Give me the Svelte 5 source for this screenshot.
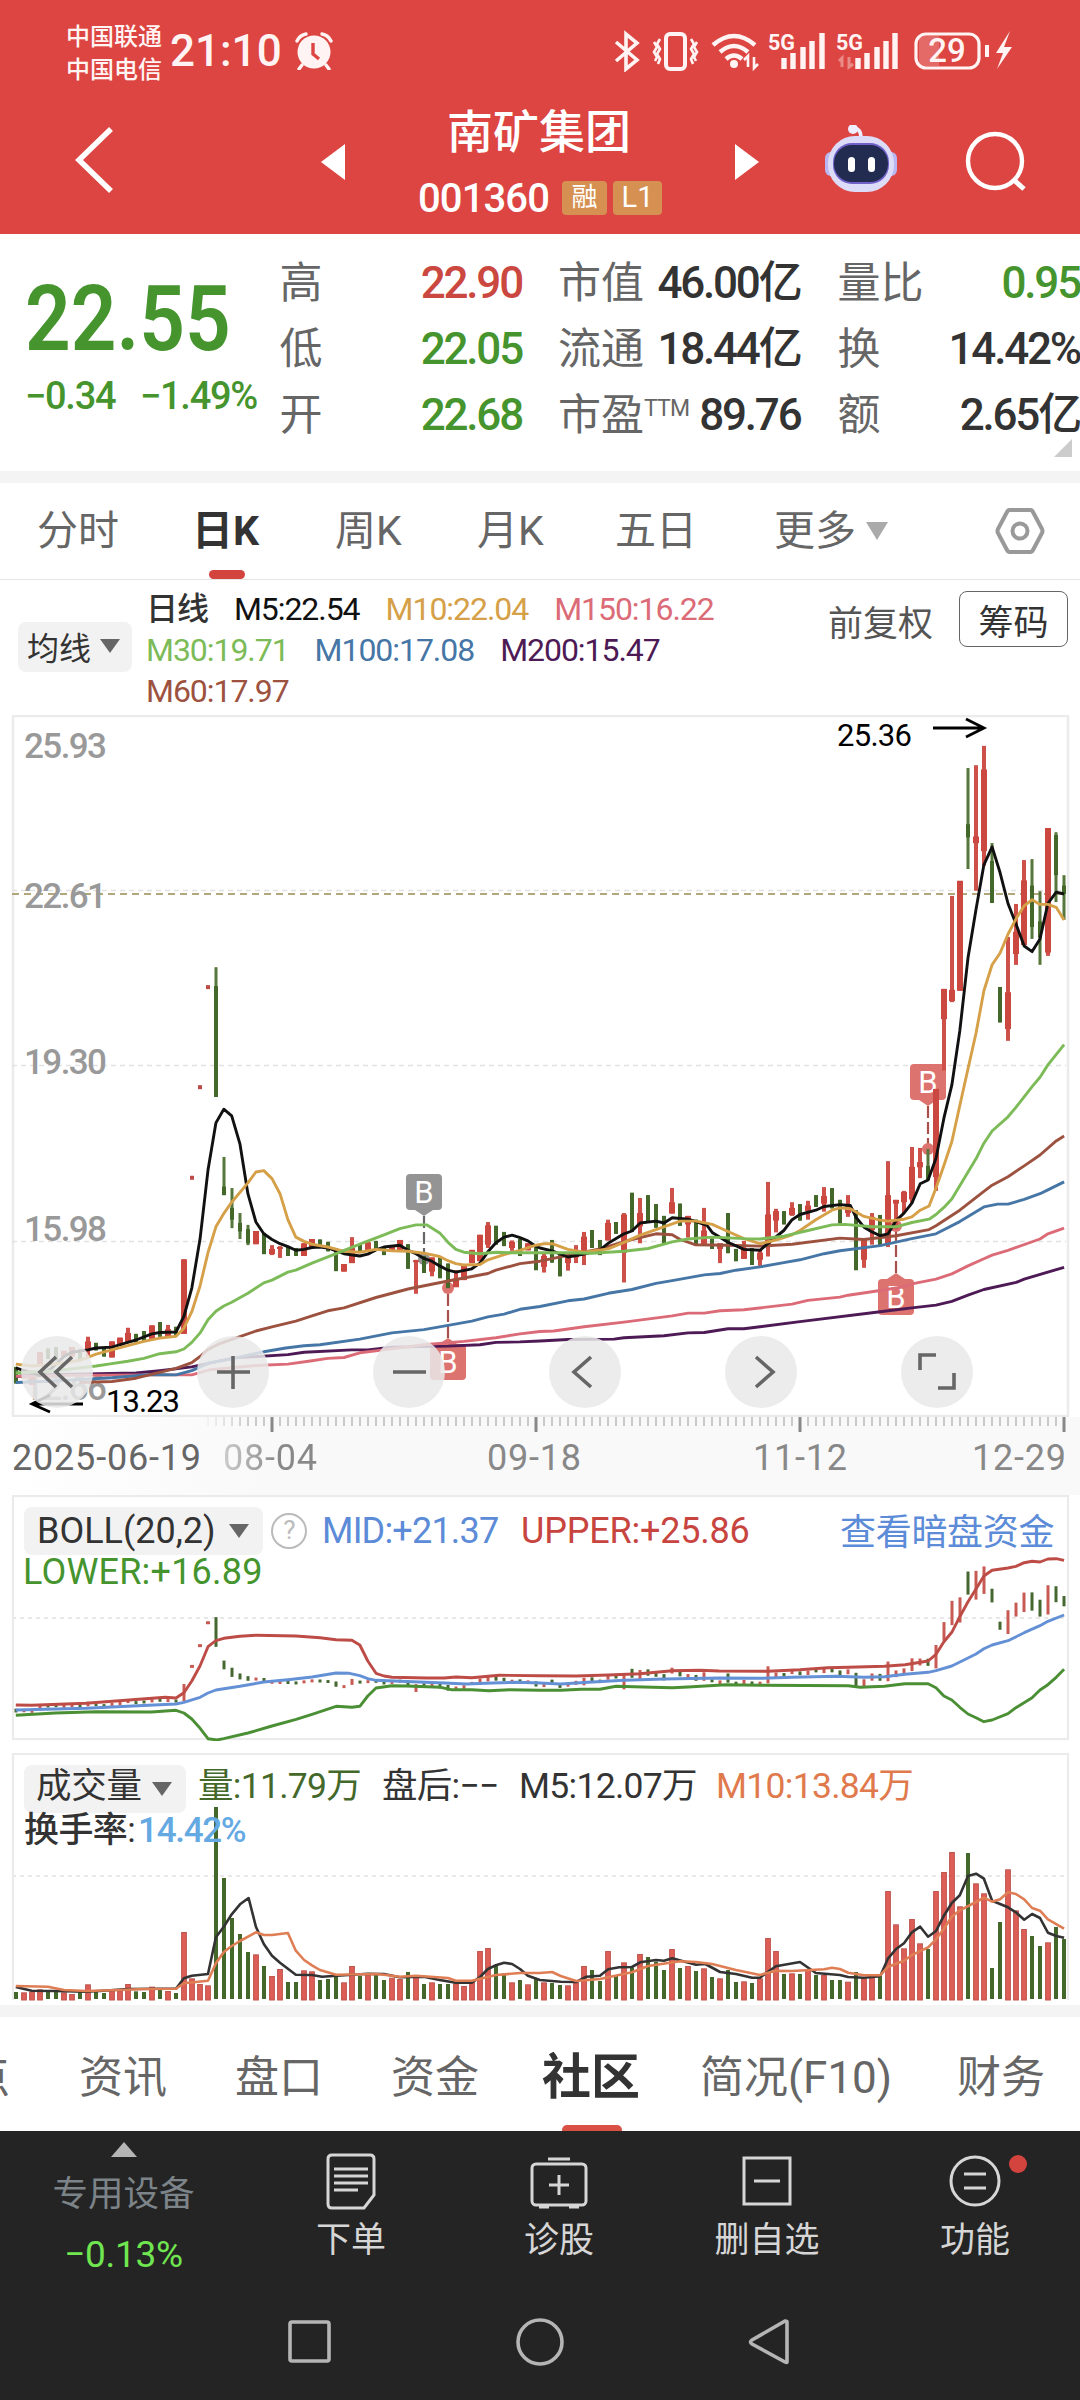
<script lang="ts">
	// one entry per day: colour, high, low, [body top, body bottom]
	const raw = `g 1392 1427|r 1397 1416|r 1400 1430|r 1361 1386|g 1353 1375|g 1350 1378|r 1358 1370|r 1350 1370|g 1355 1378|r 1328 1370 1338 1356|g 1341 1357|g 1350 1370|r 1338 1372|r 1330 1347|r 1309 1340 1320 1340|g 1322 1340|g 1316 1338|r 1304 1334|g 1297 1328|r 1303 1330 1312 1328|g 1307 1325|r 1164 1322|r 987 995|r 795 803|r 583 591|g 545 820 585 820|g 947 1028 1010 1028|g 1013 1098 1055 1080|g 1066 1121 1087 1105|g 1091 1134 1100 1130|r 1104 1132|g 1108 1153|r 1134 1155 1142 1153|r 1136 1161 1138 1142|g 1136 1157|g 1140 1157|r 1130 1157|r 1121 1138|g 1122 1137|g 1127 1147|g 1140 1189|r 1174 1190|r 1117 1172 1140 1172|g 1132 1150|r 1128 1145|g 1125 1142|g 1140 1155|r 1135 1147|r 1123 1146|g 1132 1184|r 1165 1237 1166 1170|g 1157 1193|r 1160 1200 1160 1190|g 1160 1204|g 1173 1225|r 1187 1223 1205 1223|r 1175 1208|r 1144 1172|r 1112 1168|r 1085 1140 1092 1133|g 1093 1133|g 1106 1136|r 1124 1146 1127 1140|g 1121 1157|r 1130 1145|g 1138 1187|r 1150 1192 1157 1180|g 1123 1171|g 1155 1200|r 1155 1188 1160 1172|r 1134 1172 1150 1160|r 1106 1176 1116 1153|g 1102 1140|g 1123 1155|r 1080 1124 1087 1124|g 1085 1110|r 1066 1213 1069 1150|g 1023 1106|r 1034 1130 1066 1094|g 1028 1087|g 1047 1097|g 1072 1130|r 1013 1067 1043 1067|g 1046 1093|r 1072 1118 1072 1090|g 1080 1134|r 1055 1134 1103 1134|g 1120 1142|r 1130 1172 1130 1142|g 1066 1151|g 1142 1168|r 1125 1163 1140 1163|g 1140 1176|r 1142 1178 1150 1165|r 1000 1158 1069 1138|r 1057 1107 1062 1082|g 1062 1090|r 1043 1072 1055 1070|g 1047 1082|r 1040 1080 1050 1062|g 1028 1053|r 1011 1063 1030 1046|g 1013 1056|g 1038 1088|r 1028 1074 1050 1066|g 1060 1187|r 1120 1182 1120 1165|r 1066 1133 1074 1102|g 1070 1134|r 956 1138 1028 1130|r 1038 1100 1038 1046|r 1019 1066 1021 1043|r 926 1044 968 1037|r 928 992 958 969|g 930 996 966 996|r 803 1019 803 990|r 591 764 591 655|r 394 619 593 617|r 362 595|g 123 337 242 270|r 117 383 268 282|r 76 330 126 299|g 282 409 320 409|g 587 662|r 481 701 598 676|r 411 540 470 517|r 318 498 361 498|g 316 485 372 460|g 384 540 448 482|r 250 521 250 514|g 259 407 265 350|g 350 445 372 390`

	const volumes = [741,742,740,733,738,740,742,747,740,718,740,744,735,738,717,739,741,725,733,738,744,561,700,717,721,186,399,519,567,621,628,663,693,672,711,711,676,679,705,702,693,712,663,693,690,690,705,698,702,681,690,717,712,717,717,715,723,705,618,609,661,685,712,705,718,700,712,714,720,721,712,663,675,708,618,693,652,668,627,636,650,675,612,669,663,678,670,696,700,675,711,709,714,700,579,618,687,685,687,675,690,690,705,705,710,681,700,693,693,438,538,610,522,595,612,438,381,321,484,324,415,445,669,531,373,496,552,573,603,592,546,582]

	// every line comes as two halves of the time axis, joined by "/"
	const maLines = [
		{ color: '#4d1a55', d: '46,1413 90,1409 250,1407 395,1405 464,1400 557,1392 680,1373 836,1366 883,1361 1022,1356 1068,1356 1138,1350 1301,1348 1394,1345 1440,1340 1510,1339 1568,1337/81,1334 215,1333 244,1330 360,1326 430,1320 477,1319 546,1311 592,1311 639,1307 755,1296 988,1275 1080,1267 1150,1261 1196,1253 1243,1240 1289,1228 1383,1213 1406,1206 1522,1181' },
		{ color: '#dc6b78', d: '46,1412 200,1410 450,1409 557,1409 610,1398 743,1389 836,1386 906,1379 952,1374 999,1372 1045,1362 1115,1356 1231,1345 1347,1338 1440,1330 1510,1322 1568,1317/40,1316 128,1307 244,1297 384,1284 430,1278 477,1278 523,1273 592,1271 732,1259 778,1251 871,1244 895,1240 988,1230 1057,1222 1080,1216 1150,1206 1196,1195 1243,1178 1289,1163 1313,1155 1359,1145 1452,1121 1475,1110 1522,1098' },
		{ color: '#4676a6', d: '46,1425 150,1422 325,1415 440,1408 511,1409 557,1400 610,1383 673,1375 720,1367 766,1360 830,1352 883,1347 929,1345 1045,1333 1138,1320 1231,1313 1301,1304 1370,1295 1417,1286 1464,1280 1510,1270 1568,1264/81,1252 128,1248 198,1236 267,1228 337,1215 384,1209 477,1197 523,1194 569,1187 639,1180 708,1171 755,1165 825,1152 871,1146 988,1135 1080,1120 1150,1110 1219,1084 1289,1053 1329,1047 1359,1047 1406,1037 1452,1025 1475,1017 1522,1000' },
		{ color: '#9d5240', d: '230,1425 325,1423 395,1416 511,1395 557,1383 581,1370 604,1355 640,1342 743,1316 790,1307 859,1295 906,1284 952,1273 999,1267 1092,1245 1185,1227 1301,1210 1417,1194 1440,1187 1510,1173 1568,1168/105,1152 174,1142 267,1122 337,1110 384,1112 407,1122 450,1133 546,1134 639,1136 732,1132 871,1119 941,1122 1034,1114 1130,1101 1150,1093 1219,1060 1289,1020 1313,1007 1359,989 1406,966 1452,943 1499,913 1522,903' },
		{ color: '#111', d: '46,1394 70,1400 116,1410 150,1395 186,1370 209,1361 255,1356 279,1352 325,1350 371,1340 395,1335 441,1322 464,1319 511,1318 534,1285 557,1225 581,1120 604,975 627,875 650,846 673,860 697,920 720,1025 743,1085 766,1110 790,1122 813,1131 836,1137 859,1145 883,1143 906,1139 929,1138 952,1140 976,1146 999,1152 1045,1157 1068,1153 1092,1144 1115,1138 1161,1134 1185,1145 1208,1152 1231,1162 1254,1168 1277,1178 1301,1187 1324,1191 1370,1184 1394,1172 1417,1148 1440,1129 1464,1117 1487,1113 1510,1118 1533,1125 1556,1136/0,1140 35,1146 81,1159 128,1153 174,1144 198,1130 244,1110 267,1104 291,1087 337,1083 360,1087 384,1076 430,1079 453,1084 485,1092 500,1107 546,1128 592,1143 639,1145 662,1130 708,1103 732,1080 755,1069 801,1060 825,1052 871,1048 901,1050 918,1075 941,1096 964,1106 988,1114 1011,1110 1034,1082 1057,1066 1080,1045 1104,1004 1127,996 1150,950 1173,865 1196,795 1219,680 1243,525 1266,423 1289,328 1313,290 1336,345 1359,410 1382,453 1406,500 1429,512 1452,485 1475,410 1499,386 1522,390' },
		{ color: '#d5a048', d: '46,1386 92,1390 139,1388 186,1383 232,1378 279,1365 325,1356 371,1347 418,1338 464,1331 511,1327 534,1310 557,1275 581,1220 604,1150 627,1095 650,1067 673,1043 720,1002 743,979 766,976 790,993 813,1025 836,1080 859,1117 883,1126 906,1132 952,1138 999,1147 1045,1149 1092,1143 1138,1146 1185,1147 1231,1151 1277,1158 1301,1167 1324,1173 1347,1176 1394,1175 1417,1165 1464,1154 1510,1145 1556,1134/12,1131 35,1131 81,1143 128,1149 198,1142 244,1128 291,1113 337,1101 407,1083 453,1083 500,1090 546,1105 592,1120 639,1131 685,1123 732,1112 755,1103 801,1080 848,1060 871,1055 901,1057 941,1073 988,1081 1011,1083 1057,1079 1080,1074 1104,1060 1130,1051 1150,1013 1173,965 1196,915 1219,838 1243,760 1266,685 1289,595 1313,540 1336,515 1359,475 1382,443 1406,415 1429,402 1452,412 1475,412 1499,418 1522,445' },
		{ color: '#7cbb58', d: '46,1405 162,1400 279,1390 325,1385 371,1380 418,1374 464,1364 511,1360 534,1354 557,1340 581,1320 604,1292 627,1274 650,1263 673,1255 720,1236 766,1214 790,1208 836,1191 859,1187 906,1172 976,1152 1045,1132 1115,1112 1161,1099 1208,1091 1240,1091 1277,1108 1301,1128 1324,1143 1347,1149 1394,1152 1440,1149 1487,1150 1568,1150/81,1150 151,1151 244,1147 314,1141 384,1127 430,1121 500,1117 592,1120 639,1121 708,1115 778,1103 848,1091 885,1090 964,1095 1034,1095 1080,1086 1130,1079 1150,1069 1173,1054 1196,1036 1219,1008 1266,951 1289,918 1313,892 1359,862 1382,842 1429,798 1452,778 1475,752 1522,709' }
	]
	const bollLines = [
		{ color: '#bd4c46', d: '46,675 92,676 250,670 480,652 511,654 534,638 557,603 581,557 604,500 627,482 650,475 697,469 743,466 859,468 930,473 976,479 1022,481 1045,495 1068,543 1092,580 1115,588 1138,592 1240,594 1290,594 1324,591 1370,593 1450,586 1568,587/105,588 198,585 290,581 384,572 465,571 520,573 662,574 755,569 835,563 895,562 1000,559 1060,554 1127,543 1150,523 1173,485 1196,457 1219,410 1243,365 1266,327 1289,288 1313,271 1359,264 1382,259 1406,248 1429,244 1452,246 1475,237 1499,236 1522,241' },
		{ color: '#6490d6', d: '46,690 250,685 400,677 511,672 534,667 581,652 604,639 627,630 697,619 766,606 836,599 906,591 976,579 1015,580 1045,587 1068,596 1092,601 1200,605 1290,609 1355,612 1430,609 1500,607 1568,609/60,612 140,607 244,601 360,597 523,594 639,595 732,592 860,589 941,592 1000,590 1060,583 1127,577 1150,572 1196,558 1243,534 1266,522 1289,506 1313,495 1359,482 1406,458 1452,437 1475,424 1522,405' },
		{ color: '#4b8f35', d: '46,706 160,699 280,695 440,696 511,691 534,699 557,717 581,745 604,776 630,780 650,776 720,759 790,738 860,718 906,703 976,679 1022,682 1045,679 1068,648 1092,624 1138,617 1180,618 1280,622 1310,629 1370,629 1420,632 1480,629 1568,631/60,631 120,628 174,628 221,619 300,621 384,623 430,621 540,614 640,616 895,617 930,622 1000,619 1060,611 1127,611 1150,623 1173,648 1196,660 1219,682 1243,702 1266,713 1289,725 1313,720 1359,701 1382,683 1429,653 1452,630 1475,614 1499,592 1522,568' }
	]
	const volLines = [
		{ color: '#333', d: '46,726 92,737 160,738 250,740 300,737 371,732 464,731 511,731 534,700 557,692 604,687 627,577 650,545 673,508 697,478 722,459 743,545 766,597 790,632 813,653 859,689 906,690 935,695 1000,691 1068,686 1115,687 1161,697 1231,695 1277,705 1324,713 1370,713 1394,696 1417,672 1440,661 1464,653 1487,657 1510,672 1533,692 1568,705/60,710 105,711 135,695 174,692 198,673 230,667 267,666 291,652 337,645 360,647 384,640 453,659 480,657 523,681 569,687 616,698 639,698 662,680 685,664 755,651 801,684 871,690 895,696 941,698 988,694 1011,640 1034,612 1057,595 1080,562 1104,545 1127,575 1150,558 1173,512 1196,474 1219,451 1243,393 1266,386 1289,401 1313,467 1359,487 1382,502 1406,524 1429,507 1452,519 1475,563 1499,573 1522,578' },
		{ color: '#df7e54', d: '46,723 139,725 186,735 250,738 348,735 418,732 511,731 534,715 604,707 627,655 650,621 673,603 697,588 743,562 766,570 790,570 836,564 859,617 883,645 906,661 929,675 976,689 1090,687 1115,689 1161,695 1208,692 1301,699 1324,707 1370,707 1440,690 1510,684 1568,684/35,681 60,693 105,708 174,702 267,682 314,663 407,649 453,651 500,657 569,675 639,690 685,677 732,678 825,673 848,668 871,672 895,683 941,691 988,691 1011,665 1057,647 1080,630 1127,607 1150,583 1173,551 1196,515 1219,496 1266,471 1289,458 1313,470 1336,463 1359,442 1382,447 1406,463 1429,489 1452,497 1475,523 1522,551' }
	]

	// chart units to pixels
	const ky = (v: number) => 710 + v / 2.119
	const by = (v: number) => 1480 + v / 3
	const vy = (v: number) => 1745 + v / 3
	const bollY = (v: number) => by(425 + 0.3243 * (v - 587))

	function toPoints(d: string, y: (v: number) => number) {
		return d
			.split('/')
			.map((half, h) =>
				half
					.split(' ')
					.map((p) => p.split(',').map(Number))
					.map(([px, py]) => `${(h * 540 + px / 2.904).toFixed(1)},${y(py).toFixed(1)}`)
					.join(' ')
			)
			.join(' ')
	}

	const days = raw.split('|').map((s, i) => {
		const [c, ...n] = s.split(' ')
		const [hi, lo, top = hi, bottom = lo] = n.map(Number)
		return { x: 16 + i * 8, up: c === 'r', hi, lo, top, bottom, vol: volumes[i], dash: i > 21 && i < 25 }
	})

	const priceLabels = [
		['25.93', 758],
		['22.61', 908],
		['19.30', 1074],
		['15.98', 1241],
		['12.66', 1400]
	]
	const marks = [
		{ x: 424, top: 1174, dot: 1259, color: '#949494', line: '#666' },
		{ x: 448, top: 1344, dot: 1288, color: '#dd736f', line: '#a8504b' },
		{ x: 928, top: 1064, dot: 1149, color: '#dd736f', line: '#a8504b' },
		{ x: 896, top: 1279, dot: 1226, color: '#dd736f', line: '#a8504b' }
	]
	const ticks = Array.from({ length: 108 }, (_, i) => 208 + i * 8)

	const tools = [
		'M56 1357 40 1372l16 15M72 1357l-16 15 16 15',
		'M217 1372h33M233 1356v33',
		'M393 1372h33',
		'M591 1357l-17 15 17 15',
		'M756 1357l17 15-17 15',
		'M920 1370v-15h16M938 1388h16v-15'
	]

	const maLegend = [
		[['日线', '#333'], ['M5:22.54', '#111'], ['M10:22.04', '#d5a048'], ['M150:16.22', '#dc6b78']],
		[['M30:19.71', '#7cbb58'], ['M100:17.08', '#4676a6'], ['M200:15.47', '#4d1a55']],
		[['M60:17.97', '#9d5240']]
	]
</script>

<div class="phone">
	<header>
		<div class="status">
			<div class="carriers"><span>中国联通</span><span>中国电信</span></div>
			<span class="time">21:10</span>
			<svg class="alarm" width="38" height="38" viewBox="0 0 38 38">
				<circle cx="19" cy="20" r="16.5" fill="#fff4f3" />
				<path d="M2 9Q5 3 11 2M36 9Q33 3 27 2M7 33l-3 4M31 33l3 4" stroke="#fff4f3" stroke-width="3.4" stroke-linecap="round" fill="none" />
				<path d="M18 11v11l6 5" stroke="#dc4541" stroke-width="3.4" fill="none" />
			</svg>
			<svg class="sys" width="404" height="42" viewBox="612 30 404 42" fill="none" stroke="#fff4f3">
				<path d="M616 42l21 18-11 9V34l11 9-21 18" stroke-width="3.6" />
				<rect x="666" y="34" width="19" height="35" rx="4" stroke-width="4" />
				<path d="M660 39l-3 5 3 5-3 5 3 5-2 5M654 42l3 5-3 5 3 5-2 4M691 39l3 5-3 5 3 5-3 5 2 5M697 42l-3 5 3 5-3 5 2 4" stroke-width="2.6" />
				<path d="M713 45q21-18 42 0M720 52q14-12 28 0M726 59q8-7 16 0" stroke-width="4.4" />
				<circle cx="734" cy="64" r="4" fill="#fff4f3" stroke="none" />
				<path d="M748 67V56l-4 4M754 57v11l4-4" stroke-width="2.6" />
				<path d="M784 69V58M793 69V53M803 69V47M812 69V41M822 69V33" stroke-width="5.4" stroke-linecap="butt" />
				<path d="M858 69V58M867 69V53M877 69V47M886 69V41M895 69V33" stroke-width="5.4" />
				<path d="M842 67V58l-3 3M849 57v10l4-3" stroke-width="3" opacity=".4" />
				<rect x="916" y="34" width="63" height="34" rx="10" stroke-width="3.2" />
				<path d="M919 41q0-5 5-5h15v30h-15q-5 0-5-5z" fill="#fff" opacity=".2" stroke="none" />
				<path d="M987 45v12" stroke-width="4" />
				<path d="M1010 31l-14 22h7l-6 16 15-22h-8z" fill="#fff4f3" stroke="none" />
				<g fill="#fff4f3" stroke="none" font-family="Roboto, sans-serif" font-weight="700">
					<text x="768" y="50" font-size="22" textLength="27" lengthAdjust="spacingAndGlyphs">5G</text>
					<text x="836" y="50" font-size="22" textLength="27" lengthAdjust="spacingAndGlyphs">5G</text>
					<text x="947" y="62" font-size="33" font-weight="500" text-anchor="middle">29</text>
				</g>
			</svg>
		</div>
		<div class="title-bar">
			<svg class="back" width="44" height="68" viewBox="0 0 44 68"><path d="M38 3 6 34l32 31" stroke="#fff" stroke-width="5.5" fill="none" /></svg>
			<svg class="prev" width="24" height="36" viewBox="0 0 24 36"><path d="M24 0v36L0 18z" fill="#fff" /></svg>
			<div class="title">
				<div class="name">南矿集团</div>
				<div class="code"><span>001360</span><b>融</b><b class="l1">L1</b></div>
			</div>
			<svg class="next" width="24" height="36" viewBox="0 0 24 36"><path d="M0 0v36l24-18z" fill="#fff" /></svg>
			<svg class="robot" width="74" height="68" viewBox="0 0 74 68">
				<circle cx="29" cy="4" r="5" fill="#eef" />
				<path d="M29 3q8 0 8 10" stroke="#eef" stroke-width="3.5" fill="none" />
				<rect x="1" y="27" width="12" height="24" rx="6" fill="#b9b6f2" />
				<rect x="61" y="27" width="12" height="24" rx="6" fill="#b9b6f2" />
				<rect x="4" y="11" width="66" height="56" rx="27" fill="#dcdcf8" />
				<rect x="9" y="18" width="56" height="41" rx="19" fill="#7060c8" />
				<rect x="10" y="20" width="54" height="37" rx="18" fill="#222b50" />
				<rect x="24" y="32" width="7" height="15" rx="3.5" fill="#fff" />
				<rect x="44" y="32" width="7" height="15" rx="3.5" fill="#fff" />
			</svg>
			<svg class="search" width="64" height="64" viewBox="0 0 64 64" fill="none" stroke="#fff" stroke-width="4.4">
				<circle cx="31" cy="31" r="27" /><path d="M50 50l10 9" stroke-width="5" />
			</svg>
		</div>
	</header>

	<section class="quote">
		<div class="price">
			<div class="last">22.55</div>
			<div class="change"><span>−0.34</span><span>−1.49%</span></div>
		</div>
		<dl class="c1">
			<dt>高</dt><dd class="red">22.90</dd>
			<dt>低</dt><dd class="green">22.05</dd>
			<dt>开</dt><dd class="green">22.68</dd>
		</dl>
		<dl class="c2">
			<dt>市值</dt><dd>46.00亿</dd>
			<dt>流通</dt><dd>18.44亿</dd>
			<dt>市盈<sup>TTM</sup></dt><dd>89.76</dd>
		</dl>
		<dl class="c3">
			<dt>量比</dt><dd class="green">0.95</dd>
			<dt>换</dt><dd>14.42%</dd>
			<dt>额</dt><dd>2.65亿</dd>
		</dl>
		<i class="corner"></i>
	</section>

	<nav class="periods">
		<span>分时</span>
		<span class="active">日K</span>
		<span>周K</span>
		<span>月K</span>
		<span>五日</span>
		<span>更多<i class="tri"></i></span>
		<svg width="50" height="48" viewBox="0 0 50 48" fill="none" stroke="#999" stroke-width="4">
			<path d="M14 3h22q1 0 2 2l9 17q1 2 0 4l-9 17q-1 2-2 2H14q-1 0-2-2L3 26q-1-2 0-4l9-17q1-2 2-2z" /><circle cx="25" cy="24" r="7.5" />
		</svg>
	</nav>

	<section class="ma">
		<div class="pill">均线<i class="tri"></i></div>
		<div class="legend">
			{#each maLegend as row}
				<div>
					{#each row as [text, color]}<span style="color: {color}">{text}</span>{/each}
				</div>
			{/each}
		</div>
		<span class="adjust">前复权</span>
		<button type="button">筹码</button>
	</section>

	<svg class="chart" width="1080" height="702" viewBox="0 715 1080 702">
		<rect x="13" y="716" width="1055" height="700" fill="none" stroke="#ebebeb" stroke-width="2.5" />
		<g stroke="#e2e2e2" stroke-width="1.5" stroke-dasharray="5 4">
			<path d="M12 890.5H1066M12 1065.5H1066M12 1241.5H1066" />
		</g>
		<path d="M12 894H1066" stroke="#b4a67c" stroke-width="2" stroke-dasharray="7 5" />
		<g class="axis-label">
			{#each priceLabels as [text, y]}
				<text x="24" {y} textLength="83">{text}</text>
			{/each}
		</g>
		{#each marks as m}
			{@const down = m.top < m.dot}
			<g fill={m.color}>
				<path d="M{m.x} {down ? m.top + 42 : m.top - 6}V{m.dot}" stroke={m.line} stroke-width="2.2" stroke-dasharray="12 4" />
				<circle cx={m.x} cy={m.dot} r="6" />
				<rect x={m.x - 18} y={m.top} width="36" height="36" rx="4" />
				{#if down}
					<path d="M{m.x - 9} {m.top + 36}h18l-9 6z" />
				{:else}
					<path d="M{m.x - 9} {m.top}h18l-9-6z" />
				{/if}
				<text x={m.x} y={m.top + 29} class="mark">B</text>
			</g>
		{/each}
		{#each days as d}
			{#if d.dash}
				<rect x={d.x - 2} y={ky(d.hi)} width="4" height="4" fill="#bd4c46" />
			{:else if d.up}
				<rect x={d.x - 2} y={ky(d.hi)} width="4" height={ky(d.lo) - ky(d.hi)} fill="#ce5048" />
				<rect x={d.x - 3} y={ky(d.top)} width="6" height={ky(d.bottom) - ky(d.top)} fill="#cb4840" />
			{:else}
				<rect x={d.x - 1.5} y={ky(d.hi)} width="3" height={ky(d.lo) - ky(d.hi)} fill="#55773c" />
				<rect x={d.x - 2} y={ky(d.top)} width="4" height={ky(d.bottom) - ky(d.top)} fill="#44682a" />
			{/if}
		{/each}
		{#each maLines as l}
			<polyline points={toPoints(l.d, ky)} fill="none" stroke={l.color} stroke-width="2.9" stroke-linejoin="round" />
		{/each}
		<g fill="none" stroke="#000" stroke-width="2.8">
			<path d="M933 728h50M966 719l18 9-18 9" />
			<path d="M83 1404H33M50 1395l-18 9 18 8" />
		</g>
		<text x="837" y="746" class="extreme" textLength="75">25.36</text>
		<text x="106" y="1412" class="extreme" textLength="74">13.23</text>
		{#each tools as path, i}
			<circle cx={57 + i * 176} cy="1372" r="36" fill="#e9e9e9" fill-opacity=".85" />
			<path d={path} fill="none" stroke="#666" stroke-width="3.6" />
		{/each}
	</svg>

	<div class="dates">
		<svg width="1080" height="16" viewBox="0 1417 1080 16">
			{#each ticks as x}
				<path d="M{x} 1417v{(x - 8) % 264 ? 9 : 15}" stroke={(x - 8) % 264 ? '#aaa' : '#888'} stroke-width={(x - 8) % 264 ? 1.2 : 3} opacity={Math.min(1, (x - 200) / 50)} />
			{/each}
		</svg>
		<div class="date-row">
			<span class="first">2025-06-19</span><span class="faded">08-04</span><span>09-18</span><span>11-12</span><span>12-29</span>
		</div>
	</div>

	<section class="pane boll">
		<svg class="plot" width="1080" height="246" viewBox="0 1495 1080 246">
			<rect x="13" y="1496" width="1055" height="243" fill="none" stroke="#ebebeb" stroke-width="2.2" />
			<path d="M12 1618H1066" stroke="#e8e8e8" stroke-width="2" stroke-dasharray="4 4" />
			{#each days as d}
				<path d="M{d.x} {bollY(d.hi)}V{Math.max(bollY(d.lo), bollY(d.hi) + 3)}" stroke={d.up ? '#c85a54' : '#456830'} stroke-width={d.dash ? 4 : 3} />
			{/each}
			{#each bollLines as l}
				<polyline points={toPoints(l.d, by)} fill="none" stroke={l.color} stroke-width="2.9" stroke-linejoin="round" />
			{/each}
		</svg>
		<div class="line">
			<div class="pill">BOLL(20,2)<i class="tri"></i></div>
			<i class="help">?</i>
			<span class="mid">MID:+21.37</span>
			<span class="upper">UPPER:+25.86</span>
			<span class="link">查看暗盘资金</span>
		</div>
		<div class="line2 lower">LOWER:+16.89</div>
	</section>

	<section class="pane volume">
		<svg class="plot" width="1080" height="252" viewBox="0 1753 1080 252">
			<path d="M13 2000V1754H1068V2000" fill="none" stroke="#ebebeb" stroke-width="2.2" />
			<path d="M12 1876H1066" stroke="#e8e8e8" stroke-width="2" stroke-dasharray="4 4" />
			{#each days as d}
				{#if d.up}
					<rect x={d.x - 2.4} y={vy(d.vol) + 0.5} width="4.8" height={1999.5 - vy(d.vol)} fill="#dd5e56" stroke="#bf5750" />
				{:else}
					<rect x={d.x - 2} y={vy(d.vol)} width="4" height={1999 - vy(d.vol)} fill="#44682a" />
				{/if}
			{/each}
			{#each volLines as l}
				<polyline points={toPoints(l.d, vy)} fill="none" stroke={l.color} stroke-width="2.6" stroke-linejoin="round" />
			{/each}
		</svg>
		<div class="line">
			<div class="pill"><span>成交量</span><i class="tri"></i></div>
			<span class="vol">量:11.79万</span>
			<span class="after">盘后:−−</span>
			<span class="v5">M5:12.07万</span>
			<span class="v10">M10:13.84万</span>
		</div>
		<div class="line2">换手率:<span>14.42%</span></div>
	</section>

	<nav class="sections">
		<span>点</span>
		<span>资讯</span>
		<span>盘口</span>
		<span>资金</span>
		<span class="active">社区</span>
		<span>简况(F10)</span>
		<span>财务</span>
	</nav>

	<footer>
		<div class="actions">
			<div class="device">
				<i></i>
				<span>专用设备</span>
				<em>−0.13%</em>
			</div>
			<div class="action">
				<svg width="60" height="60" viewBox="0 0 60 60">
					<path d="M11 4h38q4 0 4 4v36L43 57H11q-4 0-4-4V8q0-4 4-4z" /><path d="M13 18h34M13 25h34M13 32h34M13 39h24" />
				</svg>
				下单
			</div>
			<div class="action">
				<svg width="60" height="60" viewBox="0 0 60 60">
					<rect x="3" y="13" width="54" height="41" rx="4" /><path d="M19 8h22M30 24v20M20 34h20M10 56h10M40 56h10" />
				</svg>
				诊股
			</div>
			<div class="action">
				<svg width="60" height="60" viewBox="0 0 60 60">
					<rect x="7" y="7" width="46" height="46" /><path d="M17 30h26" />
				</svg>
				删自选
			</div>
			<div class="action">
				<svg width="60" height="60" viewBox="0 0 60 60">
					<circle cx="30" cy="30" r="24" /><path d="M19 23h22M19 37h22" />
				</svg>
				功能
				<i class="badge"></i>
			</div>
		</div>
		<svg class="keys" width="1080" height="60" viewBox="0 2312 1080 60" fill="none" stroke="#b5b5b5" stroke-width="3.6">
			<rect x="290" y="2322" width="39" height="39" rx="2" />
			<circle cx="540" cy="2342" r="22" />
			<path d="M787 2322v40q0 1-2 0l-33-18q-3-2 0-4l33-19q2 0 2 1z" />
		</svg>
	</footer>
</div>

<style>
	:global(body) {
		margin: 0;
		background: #fff;
	}
	.phone {
		width: 1080px;
		height: 2400px;
		overflow: hidden;
		display: flex;
		flex-direction: column;
		font-family: Roboto, 'Noto Sans CJK SC', sans-serif;
		color: #333;
		white-space: nowrap;
	}
	svg {
		display: block;
		flex: none;
	}
	i, em {
		font-style: normal;
	}
	.tri {
		display: inline-block;
		border: 10px solid transparent;
		border-top: 14px solid #666;
		border-bottom: 0;
	}

	header {
		height: 234px;
		background: #dc4541;
		color: #fff;
		flex: none;
	}
	.status {
		height: 86px;
		padding: 19px 64px 0 66px;
		box-sizing: border-box;
		display: flex;
		align-items: flex-start;
		color: #fff4f3;
	}
	.carriers {
		display: flex;
		flex-direction: column;
		width: 104px;
		margin-top: 2px;
		font-size: 24px;
		line-height: 33px;
		font-weight: 500;
	}
	.time {
		font-size: 44px;
		line-height: 64px;
		font-weight: 500;
		width: 125px;
	}
	.alarm {
		margin-top: 13px;
	}
	.sys {
		margin: 11px 0 0 auto;
	}
	.title-bar {
		height: 148px;
		display: flex;
		align-items: flex-start;
	}
	.back {
		margin: 40px 0 0 73px;
	}
	.prev {
		margin: 58px 0 0 204px;
	}
	.title {
		width: 390px;
		text-align: center;
	}
	.name {
		font-size: 46px;
		line-height: 60px;
		margin-top: 16px;
		margin-left: -2px;
		font-weight: 500;
	}
	.code {
		display: flex;
		justify-content: center;
		align-items: center;
		height: 44px;
		margin-top: 14px;
		font-size: 40px;
		letter-spacing: -.9px;
	}
	.code span {
		margin-right: 10px;
		font-weight: 500;
	}
	.code b {
		width: 45px;
		height: 34px;
		margin-left: 3px;
		border-radius: 4px;
		background: #d59052;
		font-size: 26px;
		line-height: 33px;
		font-weight: 400;
		letter-spacing: 0;
	}
	.code .l1 {
		width: 49px;
		margin-left: 6px;
		font-size: 29px;
	}
	.next {
		margin: 58px 0 0;
	}
	.robot {
		margin: 39px 0 0 65px;
	}
	.search {
		margin: 44px 0 0 66px;
	}

	.quote {
		position: relative;
		height: 237px;
		flex: none;
		display: flex;
		border-bottom: 12px solid #f4f4f4;
		box-sizing: content-box;
	}
	.price {
		width: 281px;
		color: #45942e;
	}
	.last {
		margin: 33px 0 0 25px;
		font-size: 90px;
		line-height: 106px;
		font-weight: 600;
		transform: scaleX(.89);
		transform-origin: left;
	}
	.change {
		display: flex;
		margin: 3px 0 0 25px;
		font-size: 38px;
		line-height: 40px;
		font-weight: 500;
		letter-spacing: -1.3px;
	}
	.change span:first-child {
		width: 115px;
	}
	dl {
		display: grid;
		grid-template-columns: 86px 1fr;
		grid-auto-rows: 66px;
		align-items: center;
		margin: 16px 0 0;
		line-height: 66px;
	}
	dt {
		font-size: 43px;
		color: #666;
	}
	dd {
		margin: 0;
		font-size: 44px;
		font-weight: 500;
		letter-spacing: -2.2px;
		text-align: right;
	}
	sup {
		font-size: 23px;
		line-height: 0;
		vertical-align: 14px;
		letter-spacing: -.8px;
	}
	.c1 { width: 243px; margin-left: -1px; }
	.c2 { width: 243px; margin-left: 36px; }
	.c3 { width: 243px; margin-left: 37px; }
	.red { color: #cb4840; }
	.green { color: #45942e; }
	.corner {
		position: absolute;
		right: 8px;
		bottom: 14px;
		border-left: 18px solid transparent;
		border-bottom: 18px solid #ccc;
	}

	.periods {
		height: 96px;
		flex: none;
		display: flex;
		align-items: center;
		border-bottom: 1px solid #e5e5e5;
		font-size: 41px;
		color: #666;
	}
	.periods span {
		position: relative;
		line-height: 96px;
	}
	.periods span:nth-child(1) { width: 155px; margin-left: 37px; }
	.periods span:nth-child(2) { width: 143px; }
	.periods span:nth-child(3) { width: 142px; }
	.periods span:nth-child(4) { width: 138px; }
	.periods span:nth-child(5) { width: 159px; }
	.periods span:nth-child(6) { width: 221px; }
	.periods .active {
		color: #333;
		font-weight: 700;
	}
	.periods .active::after {
		content: '';
		position: absolute;
		left: 17px;
		bottom: 0;
		width: 36px;
		height: 9px;
		border-radius: 5px;
		background: #d4443e;
	}
	.periods .tri {
		margin-left: 10px;
		border-width: 18px 11px 0;
		border-top-color: #aaa;
		vertical-align: 5px;
	}

	.ma {
		height: 135px;
		flex: none;
		display: flex;
		align-items: flex-start;
	}
	.pill {
		display: flex;
		align-items: center;
		box-sizing: border-box;
		height: 50px;
		border-radius: 8px;
		background: #f2f2f2;
	}
	.ma .pill {
		width: 114px;
		margin: 42px 0 0 18px;
		padding-left: 9px;
		padding-bottom: 2px;
		font-size: 32px;
	}
	.pill .tri {
		margin-left: 9px;
	}
	.legend {
		width: 697px;
		margin: 9px 0 0 14px;
		font-size: 32px;
		line-height: 41px;
		font-weight: 450;
		letter-spacing: -1.05px;
	}
	.legend div {
		display: flex;
		gap: 26px;
	}
	.adjust {
		width: 131px;
		font-size: 35px;
		line-height: 40px;
		margin-top: 25px;
		margin-left: -15px;
		color: #555;
	}
	.ma button {
		width: 109px;
		height: 56px;
		margin-top: 11px;
		padding: 0;
		border: 1.5px solid #666;
		border-radius: 8px;
		background: #fff;
		font: 35px Roboto, 'Noto Sans CJK SC', sans-serif;
		color: #333;
	}

	.axis-label {
		font-size: 35px;
		font-weight: 500;
		fill: #999;
	}
	.mark {
		font-size: 31px;
		text-anchor: middle;
		fill: #fff;
	}
	.extreme {
		font-size: 31px;
		fill: #000;
	}

	.dates {
		height: 78px;
		flex: none;
		background: linear-gradient(90deg, #fff, #f9f9f9 260px);
	}
	.date-row {
		display: flex;
		padding-left: 12px;
		font-size: 36px;
		line-height: 51px;
		font-weight: 450;
		letter-spacing: .8px;
		color: #888;
	}
	.date-row span {
		width: 266px;
	}
	.date-row .first {
		width: 211px;
		color: #666;
	}
	.date-row span:nth-child(4) {
		width: 219px;
	}
	.date-row .faded {
		width: 264px;
		background: linear-gradient(90deg, #ccc, #888 55px);
		background-clip: text;
		color: transparent;
	}
	.date-row span:last-child {
		width: 100px;
	}

	.pane {
		position: relative;
		flex: none;
		font-size: 36px;
		font-weight: 450;
		letter-spacing: -.6px;
	}
	.boll {
		height: 246px;
		margin-bottom: 12px;
	}
	.volume {
		height: 252px;
	}
	.plot {
		position: absolute;
		top: 0;
		left: 0;
	}
	.line {
		position: relative;
		display: flex;
		align-items: center;
		padding: 12px 0 0 24px;
		height: 48px;
	}
	.line .pill {
		height: 48px;
		padding-left: 13px;
	}
	.line2 {
		position: relative;
		padding-left: 25px;
		line-height: 32px;
	}
	.boll .pill { width: 239px; letter-spacing: 0; }
	.boll .pill .tri { margin-left: auto; margin-right: 14px; }
	.help {
		box-sizing: border-box;
		width: 36px;
		height: 36px;
		margin-left: 8px;
		border: 2.5px solid #bbb;
		border-radius: 50%;
		font-size: 26px;
		line-height: 31px;
		text-align: center;
		color: #bbb;
	}
	.mid { width: 199px; margin-left: 15px; color: #5c8bd8; letter-spacing: -.8px; }
	.upper { width: 319px; color: #c8453f; letter-spacing: -.2px; }
	.link { color: #5c8bd8; letter-spacing: -.3px; font-weight: 400; margin-top: -5px; }
	.lower { color: #45942e; letter-spacing: .2px; padding-left: 23px; line-height: 34px; }
	.volume .line { padding-top: 12px; line-height: 40px; font-size: 35.5px; letter-spacing: -.7px; }
	.volume .line > span, .volume .pill span { margin-top: -6px; font-weight: 430; }
	.volume .pill { width: 162px; padding-left: 12px; letter-spacing: -.2px; }
	.volume .pill .tri { margin-left: auto; margin-right: 14px; }
	.vol { width: 184px; margin-left: 12px; color: #44682a; }
	.after { width: 137px; }
	.v5 { width: 197px; }
	.v10 { color: #e07a4c; }
	.volume .line2 { font-size: 35px; line-height: 35px; padding-left: 24px; }
	.line2 span { color: #64a9e2; margin-left: 3px; font-weight: 500; letter-spacing: -1.3px; }

	.sections {
		height: 114px;
		flex: none;
		border-top: 12px solid #f4f4f4;
		display: flex;
		align-items: center;
		font-size: 44px;
		line-height: 114px;
		color: #666;
	}
	.sections span {
		position: relative;
		line-height: 122px;
		height: 114px;
	}
	.sections span:nth-child(1) { width: 113px; margin-left: -34px; }
	.sections span:nth-child(2) { width: 156px; }
	.sections span:nth-child(3) { width: 156px; }
	.sections span:nth-child(4) { width: 151px; }
	.sections span:nth-child(5) { width: 158px; }
	.sections span:nth-child(6) { width: 257px; }
	.sections .active {
		font-size: 49px;
		font-weight: 700;
		color: #333;
	}
	.sections .active::after {
		content: '';
		position: absolute;
		left: 20px;
		bottom: 0;
		width: 60px;
		height: 6px;
		border-radius: 5px 5px 0 0;
		background: #d95045;
	}

	footer {
		height: 269px;
		flex: none;
		background: #242424;
		color: #d6d6d6;
	}
	.actions {
		display: flex;
		height: 181px;
	}
	.device {
		width: 247px;
		display: flex;
		flex-direction: column;
		align-items: center;
		font-size: 35.5px;
		color: #7c8489;
	}
	.device i {
		margin: 11px 0 14px;
		border: 13px solid transparent;
		border-bottom: 15px solid #b5b5b5;
		border-top: 0;
	}
	.device span {
		line-height: 46px;
	}
	.device em {
		margin-top: 15px;
		line-height: 46px;
		font-size: 37px;
		letter-spacing: -.3px;
		color: #70e650;
	}
	.action {
		position: relative;
		width: 208px;
		display: flex;
		flex-direction: column;
		align-items: center;
		font-size: 35px;
		line-height: 59px;
	}
	.action svg {
		margin-top: 20px;
		fill: none;
		stroke: #d6d6d6;
		stroke-width: 3;
	}
	.badge {
		position: absolute;
		left: 138px;
		top: 24px;
		width: 18px;
		height: 18px;
		border-radius: 50%;
		background: #d4443e;
	}
</style>
